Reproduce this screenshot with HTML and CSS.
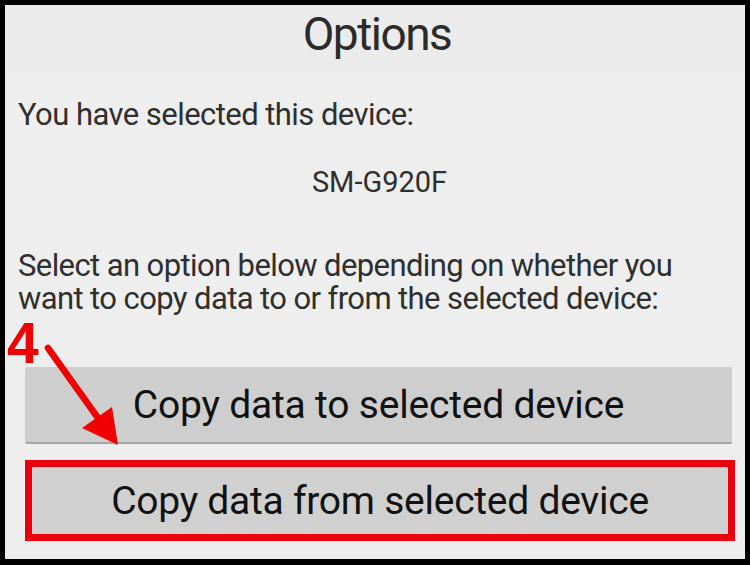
FILE: index.html
```html
<!DOCTYPE html>
<html>
<head>
<meta charset="utf-8">
<link rel="stylesheet" href="styles.css">
</head>
<body>
<div class="screen">
  <div class="header"><h1 class="title">Options</h1></div>
  <div class="content">
    <p class="label">You have selected this device:</p>
    <p class="device">SM-G920F</p>
    <p class="desc">Select an option below depending on whether you want to copy data to or from the selected device:</p>
    <div class="buttons">
      <button class="btn">Copy data to selected device</button>
      <div class="highlight"><button class="btn btn-from">Copy data from selected device</button></div>
    </div>
  </div>
  <svg class="annotation" width="130" height="155" viewBox="0 0 130 155">
    <text class="step" x="2" y="61">4</text>
    <line x1="43" y1="46" x2="93" y2="116" stroke="#f00000" stroke-width="6.5" stroke-linecap="round"/>
    <polygon points="77,126 107,105 113,143" fill="#f00000"/>
  </svg>
</div>
</body>
</html>
```
FILE: styles.css
```css
* { box-sizing: border-box; }
html, body { margin: 0; padding: 0; background: #000; }
body { width: 750px; height: 565px; overflow: hidden; padding: 5px 5px 6px 5px; font-family: Roboto, "Noto Sans", sans-serif; }
.screen { position: relative; height: 554px; background: #eeeeee; display: flex; flex-direction: column; }
.header { height: 67px; background: #ebebeb; display: flex; justify-content: center; }
.title { margin: 2px 0 0 4px; font-size: 46px; font-weight: 400; color: #2b2b2b; line-height: 54px; letter-spacing: -1.5px; }
.content { padding: 0 0 0 13px; color: #2f2f2f; }
.label { margin: 25px 0 0 0; font-size: 31px; line-height: 36px; letter-spacing: -0.55px; }
.device { margin: 32px 0 0 0; font-size: 29px; line-height: 34px; text-align: center; padding-right: 4px; letter-spacing: 0; }
.desc { margin: 50px 0 0 0; font-size: 31px; line-height: 33px; width: 700px; letter-spacing: -0.6px; }
.buttons { margin: 52px 0 0 7px; width: 710px; display: flex; flex-direction: column; gap: 16px; align-items: flex-start; }
.btn { display: block; width: 707px; height: 77px; border: none; border-bottom: 2px solid #a6a6a6; background: #cecece; border-radius: 2px; font-family: Roboto, "Noto Sans", sans-serif; font-size: 39px; color: #111; letter-spacing: -0.2px; padding: 0; }
.highlight { width: 710px; border: 7px solid #ea000c; height: 81px; }
.btn-from { width: 100%; height: 100%; border: none; background: #d0d0d0; border-radius: 0; letter-spacing: -0.25px; }
.annotation { position: absolute; left: 0; top: 297px; }
.step { font-family: "Liberation Sans", Arial, sans-serif; font-weight: 700; font-size: 57px; fill: #f00000; }
```
